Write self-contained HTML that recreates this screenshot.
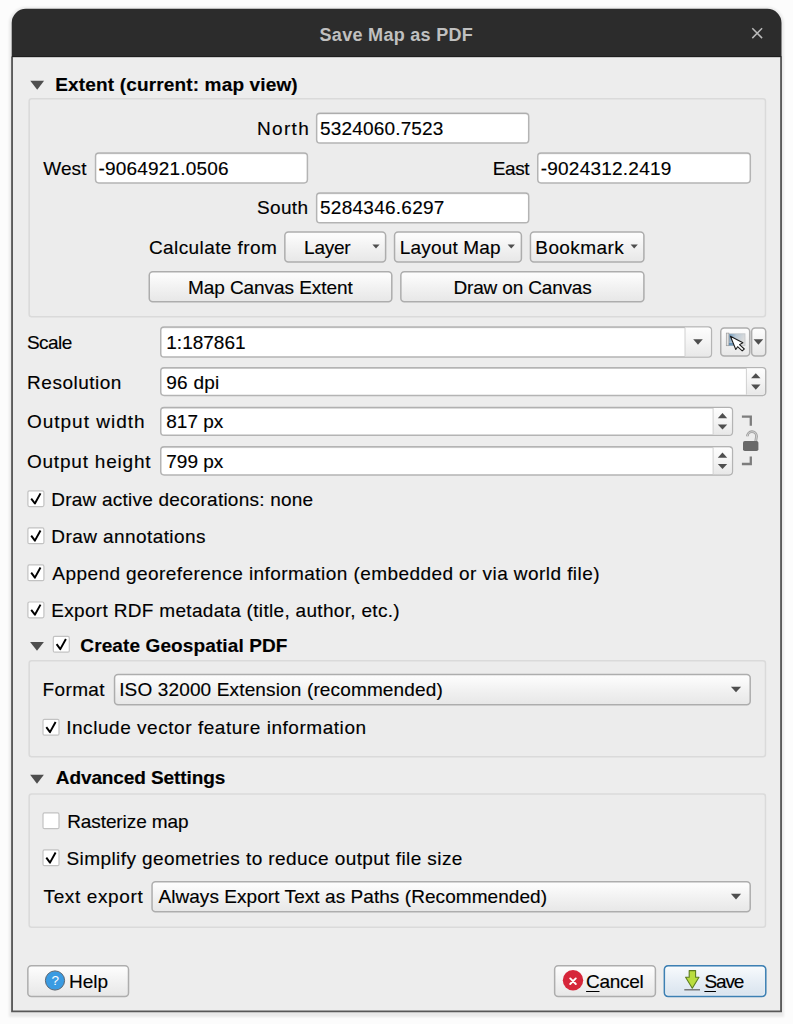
<!DOCTYPE html>
<html><head><meta charset="utf-8"><title>Save Map as PDF</title>
<style>
*{box-sizing:border-box;margin:0;padding:0}
html,body{width:793px;height:1024px;overflow:hidden;background:#fcfcfc}
body{font-family:"Liberation Sans",sans-serif;color:#000;position:relative}
.a{position:absolute}
.t{position:absolute;height:30px;line-height:30px;white-space:pre;-webkit-text-stroke:0.15px currentColor}
.win{left:12px;top:9px;width:769px;height:1003px;background:#ededed;border-radius:14px 14px 0 0;box-shadow:0 1.5px 2.5px 3px rgba(0,0,0,.075)}
svg.shapes{left:0;top:0}
</style></head>
<body>
<div class="a win"></div>
<svg class="a shapes" width="793" height="1024" viewBox="0 0 793 1024"><defs>
<linearGradient id="gb" x1="0" y1="0" x2="0" y2="1"><stop offset="0" stop-color="#fdfdfd"/><stop offset=".18" stop-color="#fafafa"/><stop offset=".5" stop-color="#f2f2f2"/><stop offset="1" stop-color="#e7e7e7"/></linearGradient>
<linearGradient id="gs" x1="0" y1="0" x2="0" y2="1"><stop offset="0" stop-color="#f8fbfd"/><stop offset=".5" stop-color="#e7eef5"/><stop offset="1" stop-color="#d8e3ee"/></linearGradient>
<linearGradient id="ga" x1="0" y1="0" x2="0" y2="1"><stop offset="0" stop-color="#fdfdfd"/><stop offset=".45" stop-color="#f5f5f5"/><stop offset="1" stop-color="#e8e8e8"/></linearGradient>
<linearGradient id="mg" x1="0" y1="0" x2="1" y2="0.35"><stop offset="0" stop-color="#5f8fb8"/><stop offset="0.45" stop-color="#b9c9d6"/><stop offset="1" stop-color="#dcdcdc"/></linearGradient>
</defs>
<path d="M11.7 57.2 V23 A14.2 14.2 0 0 1 25.9 8.8 H767.3 A14.2 14.2 0 0 1 781.5 23 V57.2 Z" fill="#2c2c2c"/>
<path d="M11.7 56.7 H781.5" stroke="#1c1c1c" stroke-width="1"/>
<path d="M12.05 57 V1011.35 H781.05 V57" fill="none" stroke="#585858" stroke-width="1.85"/>
<path d="M13.1 57.8 H780" stroke="#ffffff" stroke-opacity=".6" stroke-width="1.1"/>
<path d="M752.3 28.3 L762.1 38.1 M762.1 28.3 L752.3 38.1" stroke="#bababa" stroke-width="1.5" fill="none"/>
<path d="M30.30 80.85 H44.10 L37.20 89.75 Z" fill="#4e4e4e"/>
<path d="M30.10 641.95 H43.90 L37.00 650.85 Z" fill="#4e4e4e"/>
<path d="M30.10 774.85 H43.90 L37.00 783.75 Z" fill="#4e4e4e"/>
<rect x="29.15" y="98.85" width="736.30" height="218.00" rx="2.5" fill="#ececec" stroke="#dadada" stroke-width="1.5" />
<rect x="29.15" y="660.65" width="736.30" height="96.20" rx="2.5" fill="#ececec" stroke="#dadada" stroke-width="1.5" />
<rect x="29.15" y="793.95" width="736.30" height="133.30" rx="2.5" fill="#ececec" stroke="#dadada" stroke-width="1.5" />
<rect x="316.65" y="113.25" width="212.05" height="29.85" rx="3.3" fill="#ffffff" stroke="#b4b4b4" stroke-width="1.5" />
<path d="M318.40 114.10 H526.95" stroke="#000" stroke-opacity=".07" stroke-width="1.2"/>
<rect x="95.55" y="152.95" width="211.85" height="29.95" rx="3.3" fill="#ffffff" stroke="#b4b4b4" stroke-width="1.5" />
<path d="M97.30 153.80 H305.65" stroke="#000" stroke-opacity=".07" stroke-width="1.2"/>
<rect x="537.75" y="152.95" width="212.55" height="29.95" rx="3.3" fill="#ffffff" stroke="#b4b4b4" stroke-width="1.5" />
<path d="M539.50 153.80 H748.55" stroke="#000" stroke-opacity=".07" stroke-width="1.2"/>
<rect x="316.65" y="192.95" width="212.05" height="29.85" rx="3.3" fill="#ffffff" stroke="#b4b4b4" stroke-width="1.5" />
<path d="M318.40 193.80 H526.95" stroke="#000" stroke-opacity=".07" stroke-width="1.2"/>
<rect x="284.85" y="231.95" width="100.75" height="30.15" rx="3.5" fill="url(#gb)" stroke="#adadad" stroke-width="1.5" />
<rect x="394.55" y="231.95" width="126.85" height="30.15" rx="3.5" fill="url(#gb)" stroke="#adadad" stroke-width="1.5" />
<rect x="530.45" y="231.95" width="113.45" height="30.15" rx="3.5" fill="url(#gb)" stroke="#adadad" stroke-width="1.5" />
<path d="M372.40 244.60 H379.60 L376.00 248.60 Z" fill="#4e4e4e"/>
<path d="M507.70 244.60 H514.90 L511.30 248.60 Z" fill="#4e4e4e"/>
<path d="M630.60 244.60 H637.80 L634.20 248.60 Z" fill="#4e4e4e"/>
<rect x="149.25" y="271.75" width="242.55" height="30.05" rx="3.5" fill="url(#gb)" stroke="#adadad" stroke-width="1.5" />
<rect x="400.85" y="271.75" width="243.05" height="30.05" rx="3.5" fill="url(#gb)" stroke="#adadad" stroke-width="1.5" />
<rect x="160.75" y="327.05" width="550.65" height="30.05" rx="3.3" fill="#ffffff" stroke="#b4b4b4" stroke-width="1.5" />
<path d="M162.50 327.90 H709.65" stroke="#000" stroke-opacity=".07" stroke-width="1.2"/>
<path d="M685.00 327.60 H708.10 Q710.70 327.60 710.70 330.20 V353.80 Q710.70 356.40 708.10 356.40 H685.00 Z" fill="url(#ga)"/>
<path d="M685.00 327.60 V356.40" stroke="#d0d0d0" stroke-width="1"/>
<path d="M693.20 339.15 H702.80 L698.00 344.65 Z" fill="#4e4e4e"/>
<rect x="720.75" y="327.95" width="28.95" height="28.05" rx="3.5" fill="url(#gb)" stroke="#adadad" stroke-width="1.5" />
<rect x="751.65" y="327.95" width="14.05" height="28.05" rx="3.5" fill="url(#gb)" stroke="#adadad" stroke-width="1.5" />
<path d="M753.60 339.15 H763.20 L758.40 344.65 Z" fill="#4e4e4e"/>
<g><rect x="728.6" y="333.8" width="16.4" height="11.8" fill="url(#mg)" stroke="#c2c6c9" stroke-width="0.8"/><rect x="726.3" y="333.1" width="2.6" height="12.6" fill="#e3e3e3" stroke="#9a9a9a" stroke-width="0.7"/><path d="M728.9 343 h5 v2.6 h-5z" fill="#4d7fa8" opacity=".7"/><path d="M730.4 336.2 L742.9 342.8 L739.5 344.6 L744.3 349 L742.2 350.9 L737.6 346.7 L735.8 349.5 Z" fill="#fff" stroke="#1a1a1a" stroke-width="1.05" stroke-linejoin="round"/></g>
<rect x="160.75" y="367.65" width="604.95" height="27.75" rx="3.3" fill="#ffffff" stroke="#b4b4b4" stroke-width="1.5" />
<path d="M162.50 368.50 H763.95" stroke="#000" stroke-opacity=".07" stroke-width="1.2"/>
<path d="M746.40 368.20 H762.40 Q765.00 368.20 765.00 370.80 V392.10 Q765.00 394.70 762.40 394.70 H746.40 Z" fill="url(#ga)"/>
<path d="M746.40 368.20 V394.70" stroke="#d0d0d0" stroke-width="1"/>
<path d="M751.10 378.35 H760.50 L755.80 373.15 Z" fill="#4e4e4e"/>
<path d="M751.10 384.55 H760.50 L755.80 389.75 Z" fill="#4e4e4e"/>
<rect x="160.75" y="407.45" width="571.65" height="27.85" rx="3.3" fill="#ffffff" stroke="#b4b4b4" stroke-width="1.5" />
<path d="M162.50 408.30 H730.65" stroke="#000" stroke-opacity=".07" stroke-width="1.2"/>
<path d="M713.10 408.00 H729.10 Q731.70 408.00 731.70 410.60 V432.00 Q731.70 434.60 729.10 434.60 H713.10 Z" fill="url(#ga)"/>
<path d="M713.10 408.00 V434.60" stroke="#d0d0d0" stroke-width="1"/>
<path d="M717.80 418.20 H727.20 L722.50 413.00 Z" fill="#4e4e4e"/>
<path d="M717.80 424.40 H727.20 L722.50 429.60 Z" fill="#4e4e4e"/>
<rect x="160.75" y="446.85" width="571.65" height="28.05" rx="3.3" fill="#ffffff" stroke="#b4b4b4" stroke-width="1.5" />
<path d="M162.50 447.70 H730.65" stroke="#000" stroke-opacity=".07" stroke-width="1.2"/>
<path d="M713.10 447.40 H729.10 Q731.70 447.40 731.70 450.00 V471.60 Q731.70 474.20 729.10 474.20 H713.10 Z" fill="url(#ga)"/>
<path d="M713.10 447.40 V474.20" stroke="#d0d0d0" stroke-width="1"/>
<path d="M717.80 457.70 H727.20 L722.50 452.50 Z" fill="#4e4e4e"/>
<path d="M717.80 463.90 H727.20 L722.50 469.10 Z" fill="#4e4e4e"/>
<g><path d="M741.9 416.7 H750.8 V425.7" stroke="#7d7d7d" stroke-width="2.3" fill="none"/><path d="M741.9 464 H750.8 V456.6" stroke="#7d7d7d" stroke-width="2.3" fill="none"/><path d="M747.4 436.3 A4.5 4.5 0 0 1 756.5 436.2 L755.7 441.5" stroke="#9c9c9c" stroke-width="2.7" fill="none"/><path d="M747.4 436.3 A4.5 4.5 0 0 1 756.5 436.2 L755.7 441.5" stroke="#cfcfcf" stroke-width="1.1" fill="none"/><rect x="743" y="441" width="15.4" height="10" rx="1.8" fill="#696969"/></g>
<rect x="27.90" y="490.80" width="16.00" height="15.80" rx="1.5" fill="#ffffff" stroke="#c2c2c2" stroke-width="1.2" />
<path d="M31.20 498.60 L34.90 503.50 L40.50 493.40" stroke="#000" stroke-width="1.95" fill="none" stroke-linecap="butt" stroke-linejoin="round"/>
<rect x="27.90" y="527.90" width="16.00" height="15.80" rx="1.5" fill="#ffffff" stroke="#c2c2c2" stroke-width="1.2" />
<path d="M31.20 535.70 L34.90 540.60 L40.50 530.50" stroke="#000" stroke-width="1.95" fill="none" stroke-linecap="butt" stroke-linejoin="round"/>
<rect x="27.90" y="564.90" width="16.00" height="15.80" rx="1.5" fill="#ffffff" stroke="#c2c2c2" stroke-width="1.2" />
<path d="M31.20 572.70 L34.90 577.60 L40.50 567.50" stroke="#000" stroke-width="1.95" fill="none" stroke-linecap="butt" stroke-linejoin="round"/>
<rect x="27.90" y="602.00" width="16.00" height="15.80" rx="1.5" fill="#ffffff" stroke="#c2c2c2" stroke-width="1.2" />
<path d="M31.20 609.80 L34.90 614.70 L40.50 604.60" stroke="#000" stroke-width="1.95" fill="none" stroke-linecap="butt" stroke-linejoin="round"/>
<rect x="53.30" y="636.40" width="16.00" height="15.80" rx="1.5" fill="#ffffff" stroke="#c2c2c2" stroke-width="1.2" />
<path d="M56.60 644.20 L60.30 649.10 L65.90 639.00" stroke="#000" stroke-width="1.95" fill="none" stroke-linecap="butt" stroke-linejoin="round"/>
<rect x="114.55" y="674.55" width="635.65" height="30.25" rx="3.5" fill="url(#gb)" stroke="#adadad" stroke-width="1.5" />
<path d="M730.90 686.70 H741.10 L736.00 692.30 Z" fill="#4e4e4e"/>
<rect x="43.00" y="719.40" width="16.00" height="15.80" rx="1.5" fill="#ffffff" stroke="#c2c2c2" stroke-width="1.2" />
<path d="M46.30 727.20 L50.00 732.10 L55.60 722.00" stroke="#000" stroke-width="1.95" fill="none" stroke-linecap="butt" stroke-linejoin="round"/>
<rect x="43.00" y="812.90" width="16.00" height="15.80" rx="1.5" fill="#ffffff" stroke="#c2c2c2" stroke-width="1.2" />
<rect x="43.00" y="849.90" width="16.00" height="15.80" rx="1.5" fill="#ffffff" stroke="#c2c2c2" stroke-width="1.2" />
<path d="M46.30 857.70 L50.00 862.60 L55.60 852.50" stroke="#000" stroke-width="1.95" fill="none" stroke-linecap="butt" stroke-linejoin="round"/>
<rect x="152.05" y="881.65" width="598.15" height="30.15" rx="3.5" fill="url(#gb)" stroke="#adadad" stroke-width="1.5" />
<path d="M730.90 893.80 H741.10 L736.00 899.40 Z" fill="#4e4e4e"/>
<rect x="27.85" y="965.75" width="100.65" height="30.75" rx="3.5" fill="url(#gb)" stroke="#adadad" stroke-width="1.5" />
<rect x="554.65" y="965.75" width="100.75" height="30.75" rx="3.5" fill="url(#gb)" stroke="#adadad" stroke-width="1.5" />
<rect x="664.45" y="965.85" width="101.25" height="30.55" rx="3.6" fill="url(#gs)" stroke="#3d80b3" stroke-width="1.7" />
<rect x="665.60" y="967.00" width="98.95" height="28.25" rx="2.4" fill="none" stroke="#ffffff" stroke-width="1" stroke-opacity=".55"/>
<g transform="translate(44,969.5)"><circle cx="11" cy="11" r="9.6" fill="#3a9be2" stroke="#5b6570" stroke-width="1"/><text x="11.2" y="15.9" font-size="13.5" font-family="Liberation Sans, sans-serif" fill="#fff" text-anchor="middle">?</text></g>
<g transform="translate(562,969.3)"><circle cx="11" cy="11" r="10.2" fill="#d6263a"/><path d="M8.2 9.1 L13.8 14.7 M13.8 9.1 L8.2 14.7" stroke="#fff" stroke-width="1.9" stroke-linecap="round"/></g>
<g transform="translate(683,969)"><path d="M6.2 1.6 H12.6 V8.3 H16 L9.3 19.2 L2.6 8.3 H6.2 Z" fill="#b9dd3e" stroke="#5d7d1f" stroke-width="1.1" stroke-linejoin="round"/><path d="M1.3 20.8 H17" stroke="#666" stroke-width="1.3"/></g>
</svg>
<div class="t" style="left:319.50px;top:20.06px;font-size:18px;letter-spacing:0.307px;color:#c0c0c0;font-weight:bold;-webkit-text-stroke:0;">Save Map as PDF</div>
<div class="t" style="left:55.30px;top:70.12px;font-size:19px;letter-spacing:0.152px;color:#000;font-weight:bold;">Extent (current: map view)</div>
<div class="t" style="left:257.10px;top:114.12px;font-size:19px;letter-spacing:1.3px;color:#000;">North</div>
<div class="t" style="left:320.00px;top:114.12px;font-size:19px;letter-spacing:0.173px;color:#000;">5324060.7523</div>
<div class="t" style="left:43.30px;top:153.82px;font-size:19px;letter-spacing:0.067px;color:#000;">West</div>
<div class="t" style="left:98.60px;top:153.82px;font-size:19px;letter-spacing:0.175px;color:#000;">-9064921.0506</div>
<div class="t" style="left:492.70px;top:153.82px;font-size:19px;letter-spacing:-0.4px;color:#000;">East</div>
<div class="t" style="left:540.70px;top:153.82px;font-size:19px;letter-spacing:0.233px;color:#000;">-9024312.2419</div>
<div class="t" style="left:257.10px;top:193.32px;font-size:19px;letter-spacing:0.3px;color:#000;">South</div>
<div class="t" style="left:320.00px;top:193.32px;font-size:19px;letter-spacing:0.264px;color:#000;">5284346.6297</div>
<div class="t" style="left:148.90px;top:233.22px;font-size:19px;letter-spacing:0.415px;color:#000;">Calculate from</div>
<div class="t" style="left:304.10px;top:233.22px;font-size:19px;letter-spacing:-0.25px;color:#000;">Layer</div>
<div class="t" style="left:399.80px;top:233.22px;font-size:19px;letter-spacing:0.167px;color:#000;">Layout Map</div>
<div class="t" style="left:535.30px;top:233.22px;font-size:19px;letter-spacing:0.414px;color:#000;">Bookmark</div>
<div class="t" style="left:188.00px;top:272.62px;font-size:19px;letter-spacing:-0.069px;color:#000;">Map Canvas Extent</div>
<div class="t" style="left:453.50px;top:272.62px;font-size:19px;letter-spacing:-0.169px;color:#000;">Draw on Canvas</div>
<div class="t" style="left:26.90px;top:327.52px;font-size:19px;letter-spacing:-0.55px;color:#000;">Scale</div>
<div class="t" style="left:166.30px;top:327.52px;font-size:19px;letter-spacing:0.0px;color:#000;">1:187861</div>
<div class="t" style="left:27.10px;top:367.62px;font-size:19px;letter-spacing:0.5px;color:#000;">Resolution</div>
<div class="t" style="left:166.20px;top:367.62px;font-size:19px;letter-spacing:0.26px;color:#000;">96 dpi</div>
<div class="t" style="left:26.90px;top:406.92px;font-size:19px;letter-spacing:1.0px;color:#000;">Output width</div>
<div class="t" style="left:166.30px;top:406.92px;font-size:19px;letter-spacing:0.0px;color:#000;">817 px</div>
<div class="t" style="left:26.90px;top:446.62px;font-size:19px;letter-spacing:0.8px;color:#000;">Output height</div>
<div class="t" style="left:166.30px;top:446.62px;font-size:19px;letter-spacing:0.0px;color:#000;">799 px</div>
<div class="t" style="left:51.30px;top:484.92px;font-size:19px;letter-spacing:0.221px;color:#000;">Draw active decorations: none</div>
<div class="t" style="left:51.30px;top:521.92px;font-size:19px;letter-spacing:0.42px;color:#000;">Draw annotations</div>
<div class="t" style="left:52.30px;top:559.22px;font-size:19px;letter-spacing:0.431px;color:#000;">Append georeference information (embedded or via world file)</div>
<div class="t" style="left:51.30px;top:596.22px;font-size:19px;letter-spacing:0.315px;color:#000;">Export RDF metadata (title, author, etc.)</div>
<div class="t" style="left:80.30px;top:630.72px;font-size:19px;letter-spacing:0.115px;color:#000;font-weight:bold;">Create Geospatial PDF</div>
<div class="t" style="left:42.50px;top:675.32px;font-size:19px;letter-spacing:0.38px;color:#000;">Format</div>
<div class="t" style="left:119.20px;top:675.32px;font-size:19px;letter-spacing:0.144px;color:#000;">ISO 32000 Extension (recommended)</div>
<div class="t" style="left:66.20px;top:713.42px;font-size:19px;letter-spacing:0.542px;color:#000;">Include vector feature information</div>
<div class="t" style="left:55.80px;top:762.62px;font-size:19px;letter-spacing:-0.1px;color:#000;font-weight:bold;">Advanced Settings</div>
<div class="t" style="left:67.20px;top:807.22px;font-size:19px;letter-spacing:-0.092px;color:#000;">Rasterize map</div>
<div class="t" style="left:66.50px;top:844.12px;font-size:19px;letter-spacing:0.42px;color:#000;">Simplify geometries to reduce output file size</div>
<div class="t" style="left:43.50px;top:882.42px;font-size:19px;letter-spacing:0.63px;color:#000;">Text export</div>
<div class="t" style="left:158.40px;top:882.42px;font-size:19px;letter-spacing:0.062px;color:#000;">Always Export Text as Paths (Recommended)</div>
<div class="t" style="left:68.90px;top:966.52px;font-size:19px;letter-spacing:0.067px;color:#000;">Help</div>
<div class="t" style="left:586.10px;top:966.52px;font-size:19px;letter-spacing:-0.32px;color:#000;"><u style="text-underline-offset:2.5px;text-decoration-thickness:1.3px">C</u>ancel</div>
<div class="t" style="left:704.40px;top:966.52px;font-size:19px;letter-spacing:-1.1px;color:#000;"><u style="text-underline-offset:2.5px;text-decoration-thickness:1.3px">S</u>ave</div>
</body></html>
